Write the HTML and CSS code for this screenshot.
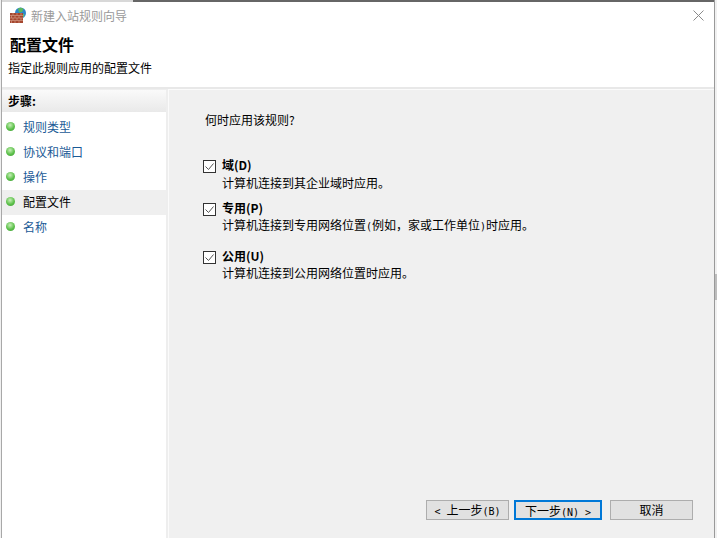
FILE: index.html
```html
<!DOCTYPE html>
<html lang="zh">
<head>
<meta charset="utf-8">
<title>新建入站规则向导</title>
<link rel="stylesheet" href="styles.css">
</head>
<body>
<div class="scrollthumb"></div>
<div class="window">
  <div class="topedge"></div>
  <header class="titlebar">
    <svg class="appicon" width="17" height="17" viewBox="0 0 17 17">
      <circle cx="10.500" cy="6" r="5.500" fill="#2f86c8"/>
      <path d="M8 1.500c2-1.200 4-.8 5.500.5l-1.500 3-3 .5z" fill="#5cb85c"/>
      <path d="M11 7c1.500-.5 3 0 3.500 1l-1.500 2.500-2-1z" fill="#6cc06a"/>
      <rect x="0" y="6" width="13" height="10" fill="#a5472f"/>
      <path d="M0 8.500h13M0 11h13M0 13.500h13M3 6v2.500M7 6v2.500M11 6v2.500M1.500 8.500V11M5 8.500V11M9 8.500V11M3 11v2.500M7 11v2.500M11 11v2.500M1.500 13.500V16M5 13.500V16M9 13.500V16" stroke="#d9a58e" stroke-width=".6" fill="none"/>
    </svg>
    <span class="titletext">新建入站规则向导</span>
    <svg class="close" width="11" height="11" viewBox="0 0 11 11"><path d="M.5.5l10 10M10.500.5l-10 10" stroke="#8a8a8a" fill="none"/></svg>
  </header>
  <section class="banner">
    <h1 class="heading">配置文件</h1>
    <p class="subheading">指定此规则应用的配置文件</p>
  </section>
  <div class="content">
    <nav class="steps">
      <div class="steps-head">步骤:</div>
      <ul class="step-list">
        <li class="step"><i class="dot"></i>规则类型</li>
        <li class="step"><i class="dot"></i>协议和端口</li>
        <li class="step"><i class="dot"></i>操作</li>
        <li class="step current"><i class="dot"></i>配置文件</li>
        <li class="step"><i class="dot"></i>名称</li>
      </ul>
    </nav>
    <main class="pane">
      <p class="question">何时应用该规则?</p>
      <div class="options">
        <div class="option opt-domain">
          <svg class="check" width="13" height="13" viewBox="0 0 13 13"><rect x=".5" y=".5" width="12" height="12" fill="#fff" stroke="#333"/><path d="M2.500 6.500l3 3 5-6" stroke="#555" fill="none"/></svg>
          <div class="opt-text"><div class="opt-title">域(D)</div><div class="opt-desc">计算机连接到其企业域时应用。</div></div>
        </div>
        <div class="option opt-private">
          <svg class="check" width="13" height="13" viewBox="0 0 13 13"><rect x=".5" y=".5" width="12" height="12" fill="#fff" stroke="#333"/><path d="M2.500 6.500l3 3 5-6" stroke="#555" fill="none"/></svg>
          <div class="opt-text"><div class="opt-title">专用(P)</div><div class="opt-desc">计算机连接到专用网络位置<span class="lat">(</span>例如&#xFF0C;家或工作单位<span class="lat">)</span>时应用。</div></div>
        </div>
        <div class="option opt-public">
          <svg class="check" width="13" height="13" viewBox="0 0 13 13"><rect x=".5" y=".5" width="12" height="12" fill="#fff" stroke="#333"/><path d="M2.500 6.500l3 3 5-6" stroke="#555" fill="none"/></svg>
          <div class="opt-text"><div class="opt-title">公用(U)</div><div class="opt-desc">计算机连接到公用网络位置时应用。</div></div>
        </div>
      </div>
      <div class="buttons">
        <button class="btn"><span class="lat">&lt; </span>上一步<span class="lat">(B)</span></button>
        <button class="btn primary">下一步<span class="lat">(N) &gt;</span></button>
        <button class="btn cancel">取消</button>
      </div>
    </main>
  </div>
</div>
</body>
</html>
```
FILE: styles.css
```css
html, body { margin: 0; height: 100%; }
body {
  position: relative;
  width: 717px;
  height: 538px;
  overflow: hidden;
  background: #f0f0f0;
  font-family: "Noto Sans CJK SC", "Liberation Sans", sans-serif;
  font-size: 12px;
  color: #000;
}
.scrollthumb {
  position: absolute;
  left: 715px;
  top: 274px;
  width: 2px;
  height: 26px;
  background: #bdbdbd;
}
.window {
  box-sizing: border-box;
  width: 714px;
  height: 538px;
  margin-left: 1px;
  border-left: 1px solid #a8a8a8;
  border-right: 1px solid #999;
  display: flex;
  flex-direction: column;
  background: #fff;
}
.topedge {
  height: 2px;
  flex: none;
  background: linear-gradient(90deg, #d8d8d8 131px, #666 131px);
}
.titlebar {
  height: 27px;
  display: flex;
  align-items: center;
  padding: 0 10px 0 8px;
  flex: none;
}
.appicon { flex: none; }
.titletext { margin-left: 4px; font-size: 12px; color: #9a9a9a; flex: 1; }
.banner { height: 58px; flex: none; box-sizing: border-box; }
.heading { margin: 5px 0 0 8px; font-size: 16px; line-height: 20px; font-weight: 700; }
.subheading { margin: 5px 0 0 6px; font-size: 12px; line-height: 18px; }
.content {
  flex: 1;
  display: flex;
  min-height: 0;
  border-top: 2px solid #e8e8e8;
  background: #fbfbfb;
}
.steps {
  width: 164px;
  flex: none;
  background: #fff;
  border-top: 1px solid #eee;
  border-right: 2px solid #eee;
}
.steps-head {
  height: 22px;
  line-height: 21px;
  padding-left: 6px;
  font-weight: 700;
  background: linear-gradient(#fafafa, #e9e9e9);
}
.step-list { list-style: none; margin: 3px 0 0; padding: 0; }
.step {
  box-sizing: border-box;
  height: 25px;
  padding: 0 0 2px 4px;
  display: flex;
  align-items: center;
  color: #1a5a96;
}
.step.current { color: #000; background: #efefef; }
.dot {
  width: 9px;
  height: 9px;
  border-radius: 50%;
  margin-right: 8px;
  margin-top: -1px;
  background: radial-gradient(circle at 45% 35%, #c8f0b8, #5cc04a 55%, #3d9a35);
}
.pane {
  flex: 1;
  margin: 1px 0 0 1px;
  display: flex;
  flex-direction: column;
  padding: 21px 21px 18px 36px;
  box-sizing: border-box;
  background: #f0f0f0;
}
.question { margin: 0; line-height: 18px; }
.options { margin: 0 0 0 -2px; padding-top: 27px; flex: 1; }
.option { display: flex; gap: 6px; }
.opt-private { margin-top: 8px; }
.opt-public { margin-top: 12px; }
.check { margin-top: 4px; flex: none; }
.opt-title { font-weight: 700; line-height: 17px; }
.opt-domain .opt-title { line-height: 18px; }
.opt-desc { line-height: 17px; }
.lat { font-family: "DejaVu Sans Mono", monospace; font-size: 10px; white-space: pre; }
.buttons { display: flex; justify-content: flex-end; }
.btn {
  box-sizing: border-box;
  width: 83px;
  height: 20px;
  padding: 0;
  border: 1px solid #adadad;
  background: #e1e1e1;
  font-family: "Noto Sans CJK SC", sans-serif;
  font-size: 12px;
  line-height: 18px;
  color: #000;
}
.primary { width: 88px; margin-left: 5px; border: 2px solid #0078d7; }
.cancel { margin-left: 8px; }
```
